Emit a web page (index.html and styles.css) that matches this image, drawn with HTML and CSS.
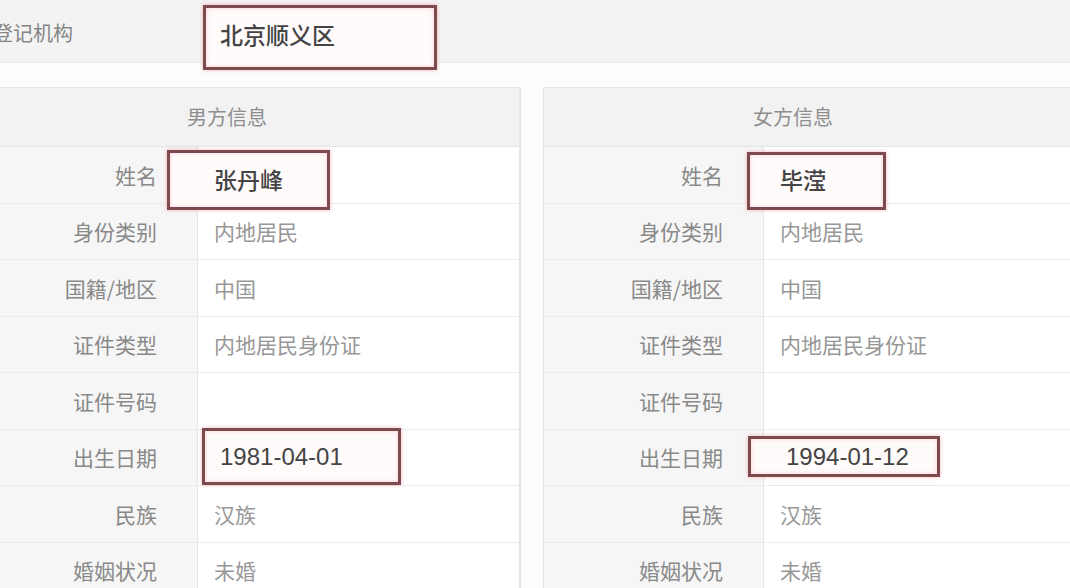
FILE: index.html
```html
<!DOCTYPE html>
<html lang="zh-CN">
<head>
  <meta charset="UTF-8">
  <title>婚姻登记信息</title>
  <meta name="viewport" content="width=device-width, initial-scale=1.0">
  <link rel="stylesheet" href="styles.css">
</head>
<body>

  <div class="top">
    <div class="top-label">登记机构</div>
    <div class="top-value">
      <span class="mark mark-org"></span>
      <span class="big">北京顺义区</span>
    </div>
  </div>

  <div class="panels">
    <div class="panel">
      <div class="panel-head">男方信息</div>
      <div class="row">
        <div class="label">姓名</div>
        <div class="value">
          <span class="mark mark-name-m"></span>
          <span class="big low">张丹峰</span>
        </div>
      </div>
      <div class="row"><div class="label">身份类别</div><div class="value">内地居民</div></div>
      <div class="row"><div class="label">国籍/地区</div><div class="value">中国</div></div>
      <div class="row"><div class="label">证件类型</div><div class="value">内地居民身份证</div></div>
      <div class="row"><div class="label">证件号码</div><div class="value"></div></div>
      <div class="row">
        <div class="label">出生日期</div>
        <div class="value">
          <span class="mark mark-birth-m"></span>
          <span class="big num">1981-04-01</span>
        </div>
      </div>
      <div class="row"><div class="label">民族</div><div class="value">汉族</div></div>
      <div class="row"><div class="label">婚姻状况</div><div class="value">未婚</div></div>
    </div>

    <div class="panel">
      <div class="panel-head">女方信息</div>
      <div class="row">
        <div class="label">姓名</div>
        <div class="value">
          <span class="mark mark-name-f"></span>
          <span class="big low">毕滢</span>
        </div>
      </div>
      <div class="row"><div class="label">身份类别</div><div class="value">内地居民</div></div>
      <div class="row"><div class="label">国籍/地区</div><div class="value">中国</div></div>
      <div class="row"><div class="label">证件类型</div><div class="value">内地居民身份证</div></div>
      <div class="row"><div class="label">证件号码</div><div class="value"></div></div>
      <div class="row">
        <div class="label">出生日期</div>
        <div class="value">
          <span class="mark mark-birth-f"></span>
          <span class="big num">1994-01-12</span>
        </div>
      </div>
      <div class="row"><div class="label">民族</div><div class="value">汉族</div></div>
      <div class="row"><div class="label">婚姻状况</div><div class="value">未婚</div></div>
    </div>
  </div>

</body>
</html>
```

FILE: styles.css
```css
body {
  margin: 0;
  background: #fdfdfd;
  font-family: "Noto Sans CJK SC", "Noto Sans", sans-serif;
  color: #8c8c8c;
  overflow: hidden;
}

.top {
  height: 62px;
  display: flex;
  background: #f3f3f3;
  border-bottom: 1px solid #ececec;
}

.top-label {
  width: 197px;
  display: flex;
  align-items: center;
  padding-top: 2px;
  font-size: 20px;
  text-indent: -7px;
  color: #858585;
}

.top-value {
  position: relative;
  display: flex;
  align-items: center;
  padding: 6px 0 0 23px;
}

.panels {
  display: grid;
  grid-template-columns: 544px 548px;
  gap: 22px;
  margin: 24px 0 0 -23px;
}

.panel {
  border: 1px solid #e6e6e6;
  border-right-width: 2px;
  background: #fff;
}

.panel-head {
  height: 58px;
  line-height: 58px;
  padding-left: 209px;
  font-size: 20px;
  color: #8e8e8e;
  background: #f2f2f2;
  border-bottom: 1px solid #e4e4e4;
}

.row {
  display: grid;
  grid-template-columns: 220px 1fr;
  height: 56.5px;
  box-sizing: border-box;
  border-bottom: 1px solid #ececec;
}

.label {
  display: flex;
  align-items: center;
  justify-content: flex-end;
  padding-right: 40px;
  font-size: 21px;
  color: #898989;
  background: #f6f6f6;
  border-right: 1px solid #e6e6e6;
}

.value {
  position: relative;
  display: flex;
  align-items: center;
  padding-left: 16px;
  font-size: 21px;
  color: #979797;
}

.big {
  position: relative;
  font-size: 23px;
  color: #444;
  font-weight: 500;
}

.low {
  padding-top: 8px;
}

.num {
  font-family: "Liberation Sans", Arial, sans-serif;
  font-size: 24px;
  font-weight: normal;
  padding-left: 6px;
}

/* red marker boxes drawn over the table */
.mark {
  position: absolute;
  border: 3px solid #7c4a4f;
  box-shadow: 0 0 4px rgba(235, 120, 135, 0.55), inset 0 0 4px rgba(235, 120, 135, 0.35);
  background: #fffbfb;
  box-sizing: border-box;
}

.mark-org { left: 6px; top: 5px; width: 234px; height: 65px; }
.mark-name-m { left: -31px; top: 3px; width: 163px; height: 60px; }
.mark-birth-m { left: 4px; top: -2px; width: 199px; height: 57px; }
.mark-name-f { left: -17px; top: 5px; width: 139px; height: 58px; }
.mark-birth-f { left: -16px; top: 6px; width: 192px; height: 41px; }
```
